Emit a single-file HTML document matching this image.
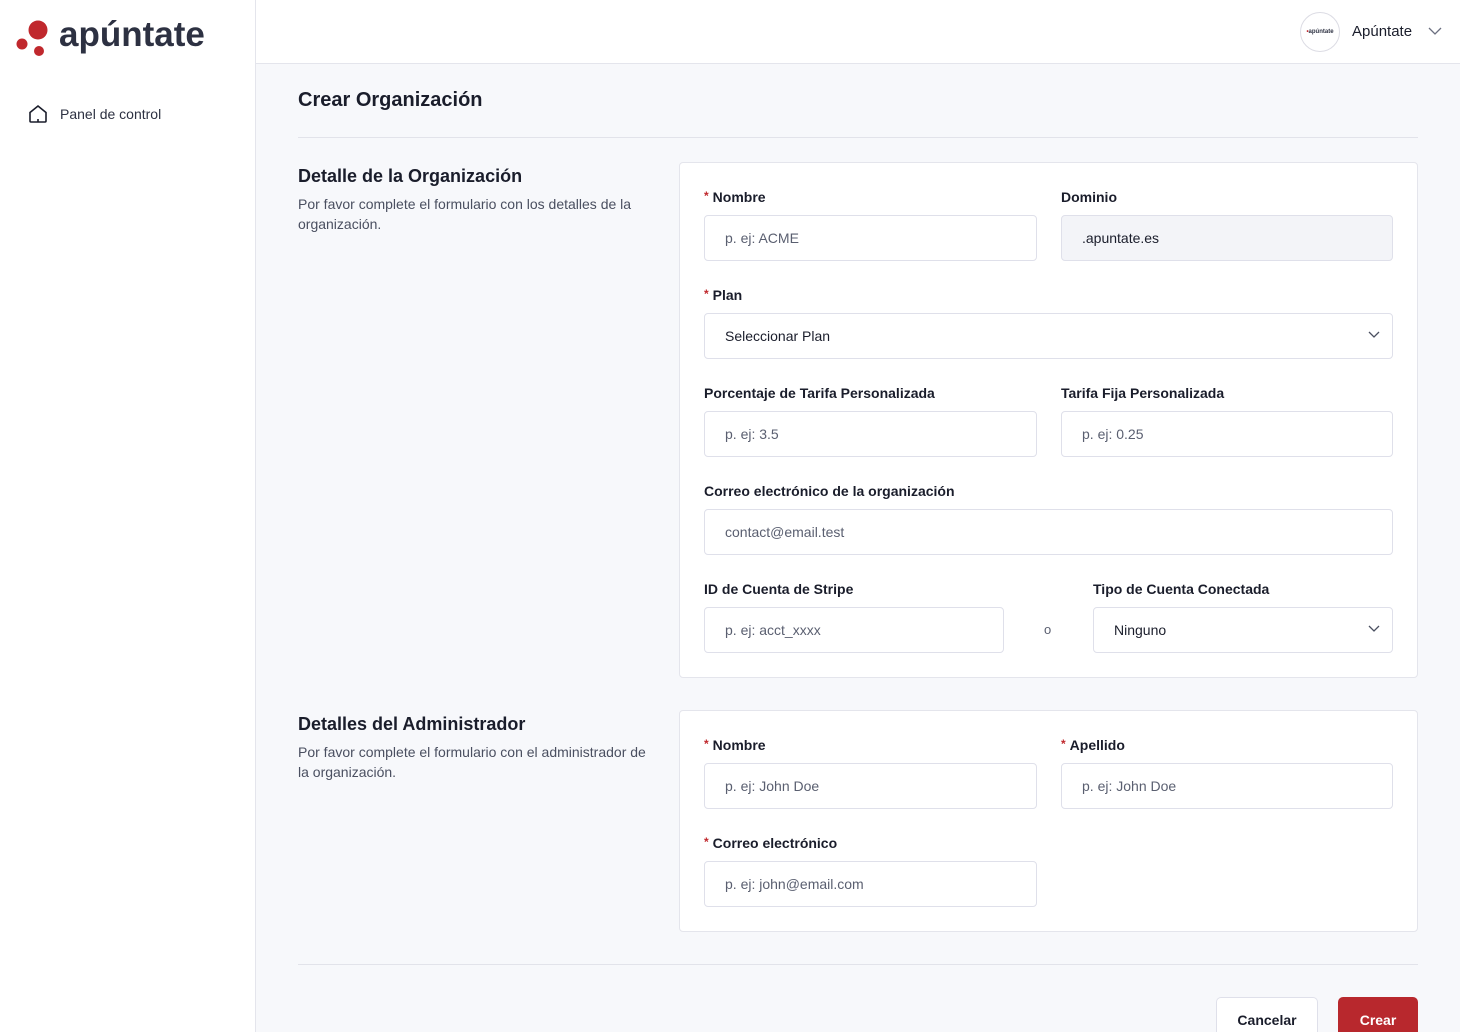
<!DOCTYPE html>
<html style="overflow:hidden;width:1460px;height:1032px"><head><meta charset="utf-8"><style>
*{box-sizing:border-box;margin:0;padding:0}
body{width:1460px;height:1032px;overflow:hidden;background:#f7f8fb;font-family:"Liberation Sans",sans-serif;color:#1a1d2b;position:relative}
.abs{position:absolute}
.side{left:0;top:0;width:256px;height:1032px;background:#fff;border-right:1px solid #e4e5ec}
.head{left:256px;top:0;right:0;height:64px;background:#fff;border-bottom:1px solid #e4e5ec}
.lbl{position:absolute;font-size:14px;font-weight:bold;color:#1a1d2b}
.lbl b{color:#c0282d;font-size:12px;margin-right:4px;vertical-align:top}
.inp{position:absolute;height:46px;background:#fff;border:1px solid #dfe0ea;border-radius:4px;font-size:14px;color:#5a5f70;padding:0 20px;line-height:44px}
.inp.v{color:#1a1d2b}
.card{position:absolute;background:#fff;border:1px solid #e4e5ec;border-radius:4px}
.chev{position:absolute;right:12px;top:17px}
</style></head><body>
<div class="abs side">
 <svg class="abs" style="left:14px;top:16px" width="40" height="42"><circle cx="24" cy="14" r="9.5" fill="#c0282d"/><circle cx="8" cy="28" r="5.5" fill="#c0282d"/><circle cx="25" cy="35" r="5" fill="#c0282d"/></svg>
 <div class="abs" style="left:59px;top:15px;font-size:35px;font-weight:bold;color:#2d3142">apúntate</div>
 <svg class="abs" style="left:28px;top:104px" width="20" height="20" viewBox="0 0 20 20" fill="none" stroke="#1a1d2b" stroke-width="1.6"><path d="M2 8.5L10 2l8 6.5V17a1 1 0 0 1-1 1H3a1 1 0 0 1-1-1z"/><path d="M10 15v3"/></svg>
 <div class="abs" style="left:60px;top:106px;font-size:14px;color:#2d3142">Panel de control</div>
</div>
<div class="abs head">
 <div class="abs" style="left:1044px;top:12px;width:40px;height:40px;border:1px solid #dcdce4;border-radius:50%;font-size:6px;font-weight:bold;color:#2d3142;text-align:center;line-height:38px"><span style="color:#c0282d">•</span>apúntate</div>
 <div class="abs" style="left:1096px;top:23px;font-size:15px;color:#1a1d2b">Apúntate</div>
 <svg class="abs" style="left:1172px;top:27px" width="14" height="9"><path d="M1 1l6 6 6-6" fill="none" stroke="#6b6f80" stroke-width="1.3"/></svg>
</div>
<div class="abs" style="left:298px;top:89px;font-size:20px;font-weight:bold;color:#1a1d2b">Crear Organización</div>
<div class="abs" style="left:298px;top:137px;width:1120px;height:1px;background:#e2e3ea"></div>
<div class="abs" style="left:298px;top:166px;font-size:18px;font-weight:bold">Detalle de la Organización</div>
<div class="abs" style="left:298px;top:194px;width:365px;font-size:14px;line-height:20px;color:#4a4f60">Por favor complete el formulario con los detalles de la organización.</div>
<div class="card" style="left:679px;top:162px;width:739px;height:516px"></div>
<div class="lbl" style="left:704px;top:189px"><b>*</b>Nombre</div>
<div class="inp" style="left:704px;top:215px;width:333px">p. ej: ACME</div>
<div class="lbl" style="left:1061px;top:189px">Dominio</div>
<div class="inp v" style="left:1061px;top:215px;width:332px;background:#f3f4f8">.apuntate.es</div>
<div class="lbl" style="left:704px;top:287px"><b>*</b>Plan</div>
<div class="inp v" style="left:704px;top:313px;width:689px">Seleccionar Plan<svg class="chev" width="12" height="8"><path d="M1 1l5 5 5-5" fill="none" stroke="#4a4f60" stroke-width="1.3"/></svg></div>
<div class="lbl" style="left:704px;top:385px">Porcentaje de Tarifa Personalizada</div>
<div class="inp" style="left:704px;top:411px;width:333px">p. ej: 3.5</div>
<div class="lbl" style="left:1061px;top:385px">Tarifa Fija Personalizada</div>
<div class="inp" style="left:1061px;top:411px;width:332px">p. ej: 0.25</div>
<div class="lbl" style="left:704px;top:483px">Correo electrónico de la organización</div>
<div class="inp" style="left:704px;top:509px;width:689px">contact@email.test</div>
<div class="lbl" style="left:704px;top:581px">ID de Cuenta de Stripe</div>
<div class="inp" style="left:704px;top:607px;width:300px">p. ej: acct_xxxx</div>
<div class="abs" style="left:1044px;top:622px;font-size:13px;color:#5a5f70">o</div>
<div class="lbl" style="left:1093px;top:581px">Tipo de Cuenta Conectada</div>
<div class="inp v" style="left:1093px;top:607px;width:300px">Ninguno<svg class="chev" width="12" height="8"><path d="M1 1l5 5 5-5" fill="none" stroke="#4a4f60" stroke-width="1.3"/></svg></div>
<div class="abs" style="left:298px;top:714px;font-size:18px;font-weight:bold">Detalles del Administrador</div>
<div class="abs" style="left:298px;top:742px;width:355px;font-size:14px;line-height:20px;color:#4a4f60">Por favor complete el formulario con el administrador de la organización.</div>
<div class="card" style="left:679px;top:710px;width:739px;height:222px"></div>
<div class="lbl" style="left:704px;top:737px"><b>*</b>Nombre</div>
<div class="inp" style="left:704px;top:763px;width:333px">p. ej: John Doe</div>
<div class="lbl" style="left:1061px;top:737px"><b>*</b>Apellido</div>
<div class="inp" style="left:1061px;top:763px;width:332px">p. ej: John Doe</div>
<div class="lbl" style="left:704px;top:835px"><b>*</b>Correo electrónico</div>
<div class="inp" style="left:704px;top:861px;width:333px">p. ej: john@email.com</div>
<div class="abs" style="left:298px;top:964px;width:1120px;height:1px;background:#e2e3ea"></div>
<div class="abs" style="left:1216px;top:997px;width:102px;height:35px;background:#fff;border:1px solid #dfe0ea;border-bottom:none;border-radius:5px 5px 0 0;font-size:14px;font-weight:bold;text-align:center;line-height:44px">Cancelar</div>
<div class="abs" style="left:1338px;top:997px;width:80px;height:35px;background:#b8282d;border-radius:5px 5px 0 0;font-size:14px;font-weight:bold;color:#fff;text-align:center;line-height:46px">Crear</div>
</body></html>
